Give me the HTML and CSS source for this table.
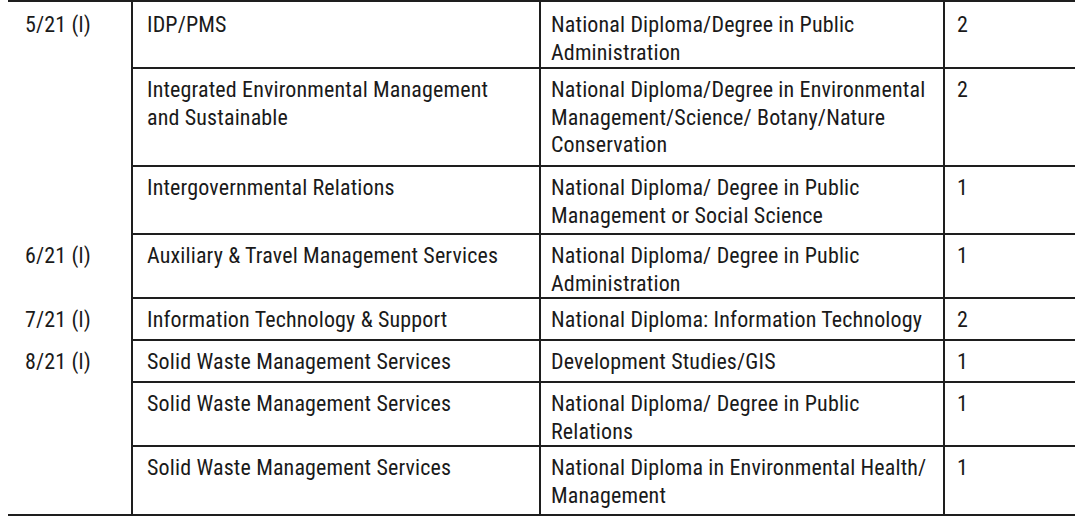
FILE: index.html
```html
<!DOCTYPE html>
<html>
<head>
<meta charset="utf-8">
<link rel="stylesheet" href="styles.css">
</head>
<body>
<table class="posts">
  <colgroup>
    <col class="c-ref">
    <col class="c-post">
    <col class="c-qual">
    <col class="c-num">
  </colgroup>
  <tbody>
    <tr class="h65">
      <td class="ref first" rowspan="3">5/21 (l)</td>
      <td class="post first">IDP/PMS</td>
      <td class="qual first">National Diploma/Degree in Public<br>Administration</td>
      <td class="num first">2</td>
    </tr>
    <tr class="h98">
      <td class="post">Integrated Environmental Management<br>and Sustainable</td>
      <td class="qual">National Diploma/Degree in Environmental<br>Management/Science/ Botany/Nature<br>Conservation</td>
      <td class="num">2</td>
    </tr>
    <tr class="h68">
      <td class="post">Intergovernmental Relations</td>
      <td class="qual">National Diploma/ Degree in Public<br>Management or Social Science</td>
      <td class="num">1</td>
    </tr>
    <tr class="h64">
      <td class="ref">6/21 (l)</td>
      <td class="post">Auxiliary &amp; Travel Management Services</td>
      <td class="qual">National Diploma/ Degree in Public<br>Administration</td>
      <td class="num">1</td>
    </tr>
    <tr class="h42">
      <td class="ref">7/21 (l)</td>
      <td class="post">Information Technology &amp; Support</td>
      <td class="qual">National Diploma: Information Technology</td>
      <td class="num">2</td>
    </tr>
    <tr class="h42">
      <td class="ref" rowspan="3">8/21 (l)</td>
      <td class="post">Solid Waste Management Services</td>
      <td class="qual">Development Studies/GIS</td>
      <td class="num">1</td>
    </tr>
    <tr class="h64">
      <td class="post">Solid Waste Management Services</td>
      <td class="qual">National Diploma/ Degree in Public<br>Relations</td>
      <td class="num">1</td>
    </tr>
    <tr class="h69">
      <td class="post">Solid Waste Management Services</td>
      <td class="qual">National Diploma in Environmental Health/<br>Management</td>
      <td class="num">1</td>
    </tr>
  </tbody>
</table>
</body>
</html>
```

FILE: styles.css
```css
html, body {
  background: #ffffff;
}
body {
  margin: 0 0 0 8px;
}
.posts {
  border-collapse: separate;
  border-spacing: 0;
  table-layout: fixed;
  width: 1067px;
  border-top: 2px solid #1e1e1e;
  border-bottom: 2px solid #1e1e1e;
  color: #1a1a1a;
  font-family: Roboto, "Liberation Sans", sans-serif;
  font-stretch: 75%;
  font-size: 22px;
  line-height: 27.5px;
  letter-spacing: 0.15px;
  white-space: nowrap;
}
.c-ref { width: 123px; }
.c-post { width: 408px; }
.c-qual { width: 404px; }
.c-num { width: 132px; }

.posts td {
  vertical-align: top;
  padding: 7px 0 0 0;
  box-sizing: border-box;
}
.posts td.post,
.posts td.qual,
.posts td.num {
  border-left: 2px solid #1e1e1e;
  border-top: 2px solid #1e1e1e;
}
.posts td.first {
  border-top: 0;
}
.posts td.ref { padding-left: 17px; padding-top: 9px; }
.posts td.first,
.posts td.ref.first { padding-top: 9px; }
.posts td.post { padding-left: 14px; }
.posts td.qual { padding-left: 10px; }
.posts td.num { padding-left: 12px; }

.h65 { height: 65px; }
.h98 { height: 98px; }
.h68 { height: 68px; }
.h64 { height: 64px; }
.h42 { height: 42px; }
.h69 { height: 69px; }
```
